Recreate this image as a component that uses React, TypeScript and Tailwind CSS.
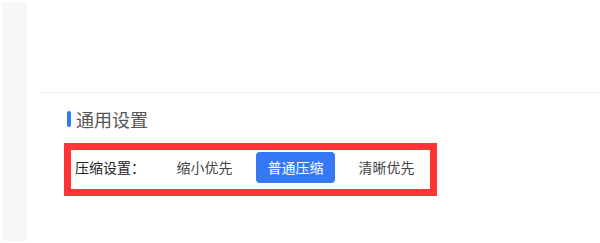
import React from "react";

export default function App() {
  const options = ["缩小优先", "普通压缩", "清晰优先"];
  const active = 1;
  return (
    <div
      className="flex h-[243px] w-[600px] overflow-hidden bg-white"
      style={{ fontFamily: '"Noto Sans CJK SC", "Noto Sans", sans-serif' }}
    >
      <div className="p-[2px] pr-0">
        <div className="h-full w-[25px] bg-[#f7f7f7]" />
      </div>
      <div className="ml-[15px] flex flex-1 flex-col">
        <div className="h-[93px] border-b border-[#eeeeee]" />
        <div className="pl-[22px]">
          <div className="mt-[14px] ml-[3px] flex h-[24px] items-center gap-[5px]">
            <span className="h-[16px] w-[4px] rounded-full bg-[#2f7bf5]" />
            <span className="text-[18px] leading-[24px] text-[#555555]">通用设置</span>
          </div>
          <div className="mt-[12px] w-[373px] border-[7px] border-[#ff3434] bg-white pt-[2px] pb-[6px] pl-[4px] pr-[3px]">
            <div className="flex items-center">
              <div className="w-[90px] text-[14px] leading-[31px] text-[#222222]">压缩设置：</div>
              <div className="flex gap-[12px]">
                {options.map((o, i) => (
                  <div
                    key={o}
                    className={
                      i === active
                        ? "flex h-[31px] w-[79px] items-center justify-center rounded-[4px] bg-[#3478f6] text-[14px] text-white"
                        : "flex h-[31px] w-[79px] items-center justify-center rounded-[4px] text-[14px] text-[#444444]"
                    }
                  >
                    {o}
                  </div>
                ))}
              </div>
            </div>
          </div>
        </div>
      </div>
    </div>
  );
}
